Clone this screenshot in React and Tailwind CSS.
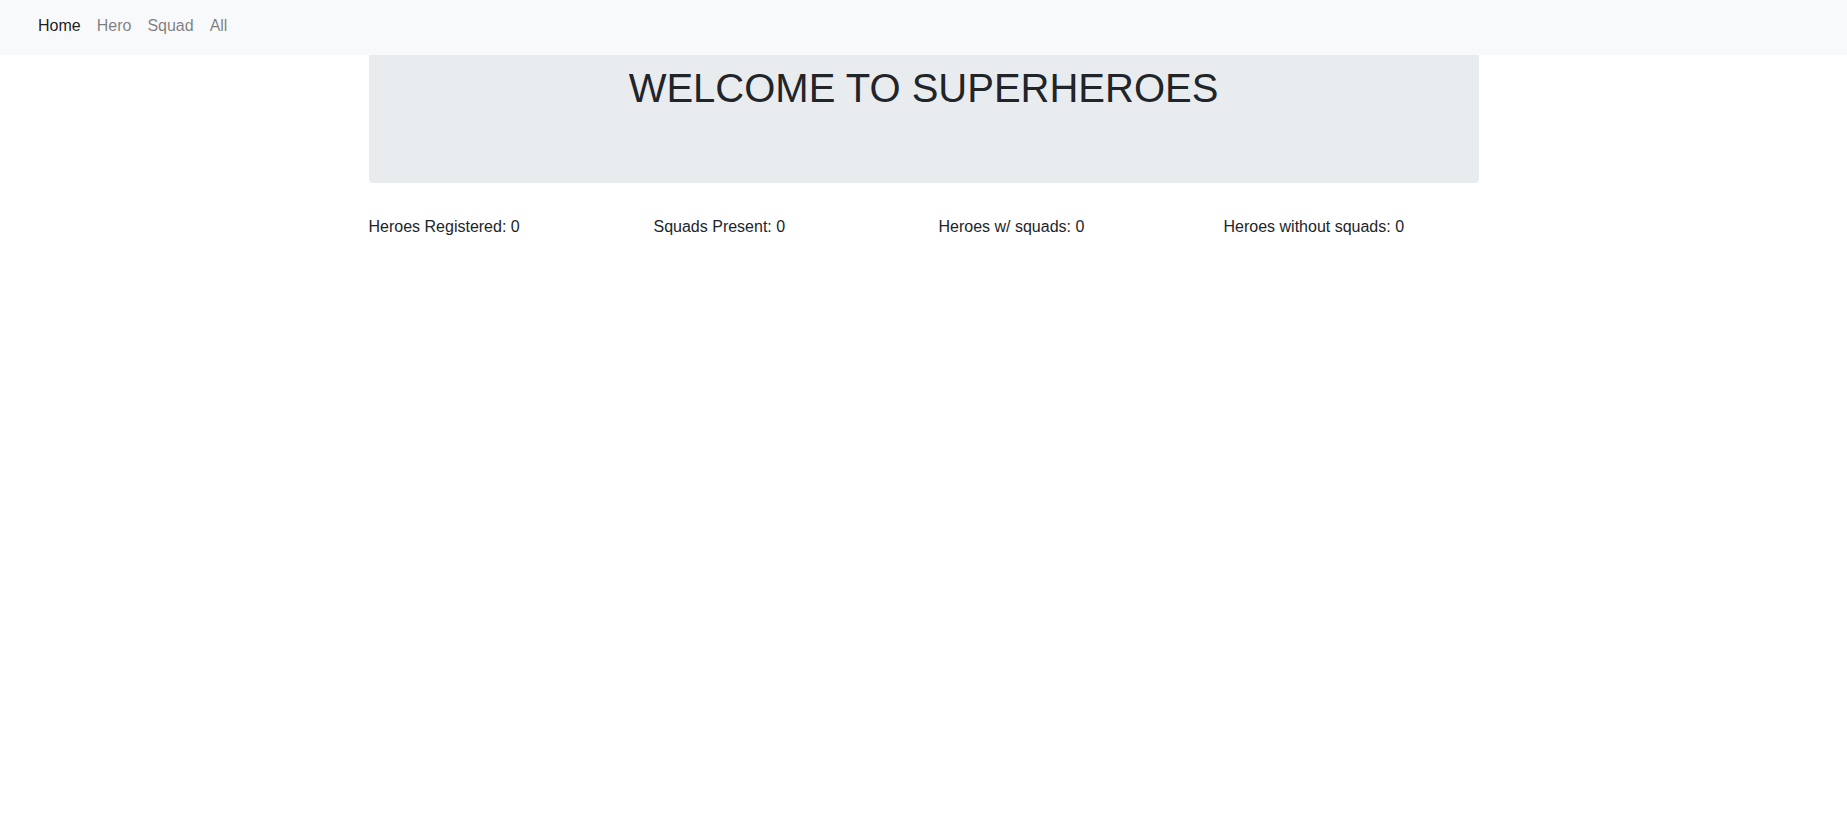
export default function App() {
  const stats = [
    { label: "Heroes Registered", value: 0 },
    { label: "Squads Present", value: 0 },
    { label: "Heroes w/ squads", value: 0 },
    { label: "Heroes without squads", value: 0 },
  ];

  return (
    <div className="min-h-screen bg-white text-[#212529] font-['Liberation_Sans',Arial,sans-serif] text-base">
      {/* Navbar */}
      <nav className="h-[55px] bg-[#f8f9fa] pt-[14px] pl-[30px]">
        <ul className="flex">
          <li className="px-2 leading-6 text-black/90">Home</li>
          <li className="px-2 leading-6 text-black/50">Hero</li>
          <li className="px-2 leading-6 text-black/50">Squad</li>
          <li className="px-2 leading-6 text-black/50">All</li>
        </ul>
      </nav>

      <div className="w-[1140px] mx-auto px-[15px]">
        <div className="h-[128px] bg-[#e9ecef] rounded-b mb-8 pt-[9px]">
          <h1 className="text-center text-[40px] leading-[48px] font-normal">
            WELCOME TO SUPERHEROES
          </h1>
        </div>

        <div className="grid grid-cols-4 -mx-[15px]">
          {stats.map((s) => (
            <div key={s.label} className="px-[15px] leading-6">
              {s.label}: {s.value}
            </div>
          ))}
        </div>
      </div>
    </div>
  );
}
